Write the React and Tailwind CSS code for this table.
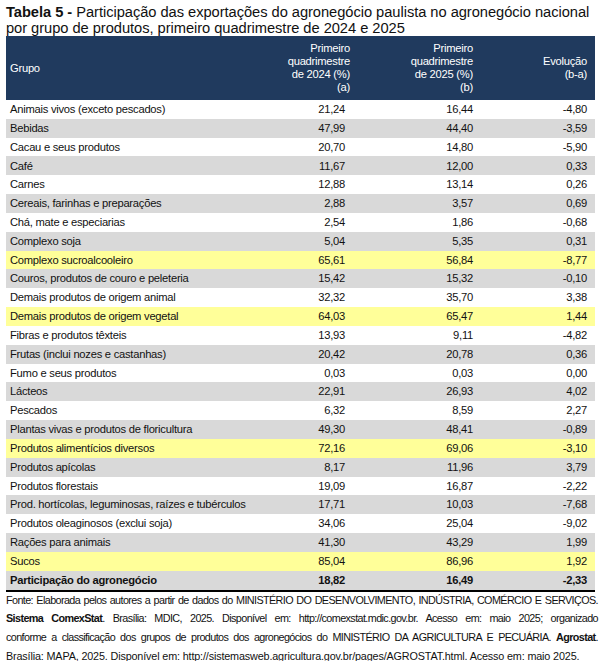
const rows = [
  ["Animais vivos (exceto pescados)", "21,24", "16,44", "-4,80"],
  ["Bebidas", "47,99", "44,40", "-3,59"],
  ["Cacau e seus produtos", "20,70", "14,80", "-5,90"],
  ["Café", "11,67", "12,00", "0,33"],
  ["Carnes", "12,88", "13,14", "0,26"],
  ["Cereais, farinhas e preparações", "2,88", "3,57", "0,69"],
  ["Chá, mate e especiarias", "2,54", "1,86", "-0,68"],
  ["Complexo soja", "5,04", "5,35", "0,31"],
  ["Complexo sucroalcooleiro", "65,61", "56,84", "-8,77", true],
  ["Couros, produtos de couro e peleteria", "15,42", "15,32", "-0,10"],
  ["Demais produtos de origem animal", "32,32", "35,70", "3,38"],
  ["Demais produtos de origem vegetal", "64,03", "65,47", "1,44", true],
  ["Fibras e produtos têxteis", "13,93", "9,11", "-4,82"],
  ["Frutas (inclui nozes e castanhas)", "20,42", "20,78", "0,36"],
  ["Fumo e seus produtos", "0,03", "0,03", "0,00"],
  ["Lácteos", "22,91", "26,93", "4,02"],
  ["Pescados", "6,32", "8,59", "2,27"],
  ["Plantas vivas e produtos de floricultura", "49,30", "48,41", "-0,89"],
  ["Produtos alimentícios diversos", "72,16", "69,06", "-3,10", true],
  ["Produtos apícolas", "8,17", "11,96", "3,79"],
  ["Produtos florestais", "19,09", "16,87", "-2,22"],
  ["Prod. hortícolas, leguminosas, raízes e tubérculos", "17,71", "10,03", "-7,68"],
  ["Produtos oleaginosos (exclui soja)", "34,06", "25,04", "-9,02"],
  ["Rações para animais", "41,30", "43,29", "1,99"],
  ["Sucos", "85,04", "86,96", "1,92", true],
];

const grid = "grid grid-cols-[234px_115px_123px_117px]";

export default function App() {
  return (
    <div className="w-[609px] h-[661px] bg-white text-[#111] font-['Liberation_Sans',Arial,sans-serif] overflow-hidden">
      <div className="pl-[6px] pt-[4px] text-[14.7px] leading-[16px] tracking-[-0.05px]">
        <p><b>Tabela 5 -</b> Participação das exportações do agronegócio paulista no agronegócio nacional</p>
        <p>por grupo de produtos, primeiro quadrimestre de 2024 e 2025</p>
      </div>

      <div className="ml-[6px] w-[589px] text-[11.2px] tracking-[-0.25px]">
        <div className={`${grid} h-[64px] bg-[#203a5e] text-white leading-[13px]`}>
          <div className="flex items-center pl-[4px]">Grupo</div>
          <div className="flex items-center justify-end text-right pr-[5px]">
            <span>Primeiro<br />quadrimestre<br />de 2024 (%)<br />(a)</span>
          </div>
          <div className="flex items-center justify-end text-right pr-[5px]">
            <span>Primeiro<br />quadrimestre<br />de 2025 (%)<br />(b)</span>
          </div>
          <div className="flex items-center justify-end text-right pr-[8px]">
            <span>Evolução<br />(b-a)</span>
          </div>
        </div>

        {rows.map((r, i) => {
          const bg = r[4] ? "bg-[#ffff99]" : i % 2 ? "bg-[#d9d9d9]" : "bg-white";
          return (
            <div key={r[0]} className={`${grid} h-[18.84px] items-center ${bg}`}>
              <div className="pl-[4px] whitespace-nowrap">{r[0]}</div>
              <div className="text-right pr-[10px]">{r[1]}</div>
              <div className="text-right pr-[5px]">{r[2]}</div>
              <div className="text-right pr-[8px]">{r[3]}</div>
            </div>
          );
        })}

        <div className={`${grid} h-[18.84px] items-center bg-[#d9d9d9] font-bold border-b-2 border-black box-content`}>
          <div className="pl-[4px] whitespace-nowrap">Participação do agronegócio</div>
          <div className="text-right pr-[10px]">18,82</div>
          <div className="text-right pr-[5px]">16,49</div>
          <div className="text-right pr-[8px]">-2,33</div>
        </div>
      </div>

      <div className="-mt-[1px] pl-[6px] pr-[11px] text-[10.8px] leading-[18.7px] tracking-[-0.6px]">
        <p className="[text-align-last:justify] whitespace-nowrap">
          Fonte: Elaborada pelos autores a partir de dados do MINISTÉRIO DO DESENVOLVIMENTO, INDÚSTRIA, COMÉRCIO E SERVIÇOS.
        </p>
        <p className="[text-align-last:justify] whitespace-nowrap">
          <b>Sistema ComexStat</b>. Brasília: MDIC, 2025. Disponível em: http://comexstat.mdic.gov.br. Acesso em: maio 2025; organizado
        </p>
        <p className="[text-align-last:justify] whitespace-nowrap">
          conforme a classificação dos grupos de produtos dos agronegócios do MINISTÉRIO DA AGRICULTURA E PECUÁRIA. <b>Agrostat</b>.
        </p>
        <p className="whitespace-nowrap tracking-[-0.15px]">
          Brasília: MAPA, 2025. Disponível em: http://sistemasweb.agricultura.gov.br/pages/AGROSTAT.html. Acesso em: maio 2025.
        </p>
      </div>
    </div>
  );
}
